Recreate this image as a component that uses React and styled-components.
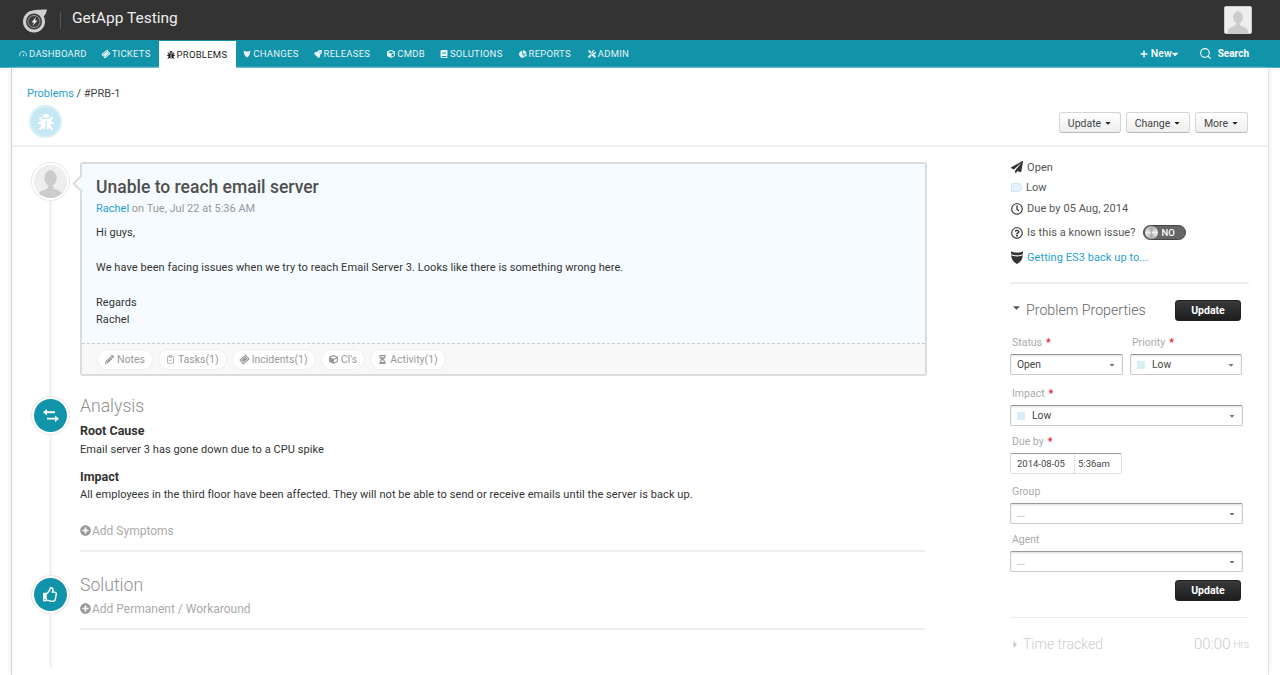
import React from 'react';
import styled, { createGlobalStyle } from 'styled-components';
import {
  FaTicketAlt, FaBug, FaRocket, FaCube, FaBook, FaChartPie, FaTools,
  FaPlus, FaPaperPlane, FaRegClock, FaRegQuestionCircle, FaPencilAlt,
  FaHourglassHalf, FaRegThumbsUp, FaPlusCircle, FaCaretDown, FaCaretRight,
} from 'react-icons/fa';
import { FiSearch } from 'react-icons/fi';
import { LuClipboardCheck } from 'react-icons/lu';

const GlobalStyle = createGlobalStyle`
  html, body { margin: 0; padding: 0; height: 675px; overflow: hidden; background: #fff; }
  body { font-family: Roboto, "Liberation Sans", sans-serif; font-size: 11px; color: #333; }
  * { box-sizing: border-box; }
`;

const TopBar = styled.header`
  height: 40px;
  background: #333;
  display: flex;
  align-items: center;
  padding: 0 28px 0 22px;
`;

const Divider = styled.span`
  width: 1px;
  height: 17px;
  background: #555;
  margin: 0 11px 0 12px;
`;

const AppName = styled.div`
  font-size: 15.5px;
  color: #eee;
  flex: 1;
  padding-bottom: 4px;
`;

const UserPic = styled.div`
  width: 28px;
  height: 28px;
  background: #eee;
  border: 1px solid #ccc;
  border-radius: 2px;
  overflow: hidden;
  display: flex;
`;

const Nav = styled.nav`
  height: 28px;
  background: #1193a9;
  border-bottom: 1px solid #4fb3c4;
  display: flex;
  align-items: stretch;
  padding-left: 19px;
  color: #e6f4f6;
`;

const NavItem = styled.a`
  display: flex;
  align-items: center;
  gap: 2px;
  font-size: 9.5px;
  letter-spacing: 0.25px;
  margin-right: ${p => p.$gap}px;
  svg { width: 8px; height: 8px; flex: none; }
  ${p => p.$active && `
    background: #fff;
    color: #222;
    height: 27px;
    margin-top: 1px;
    margin-bottom: -1px;
    padding: 0 9px 0 8px;
    svg { color: #222; }
  `}
`;

const NavRight = styled.div`
  margin-left: auto;
  display: flex;
  align-items: center;
  padding-right: 31px;
  color: #fff;
  font-size: 10px;
  font-weight: 700;
`;

const NewLink = styled.span`
  display: flex;
  align-items: center;
  gap: 3px;
  margin-right: 21px;
  font-size: 10.5px;
  font-weight: 500;
  svg:first-child { font-size: 8px; }
  svg:last-child { margin: 0 -2px 0 -5px; font-size: 10px; }
`;

const SearchLink = styled.span`
  display: flex;
  align-items: center;
  gap: 6px;
`;

const Page = styled.div`
  margin: 0 11px;
  height: 607px;
  border-left: 1px solid #d4d4d4;
  border-right: 1px solid #e4e4e4;
  box-shadow: -3px 0 4px -2px #eee, 3px 0 4px -2px #eee;
  background: #fff;
`;

const PageHead = styled.div`
  height: 79px;
  border-bottom: 2px solid #eee;
  padding: 19px 20px 0 15px;
  display: flex;
  justify-content: space-between;
`;

const Crumbs = styled.div`
  font-size: 11px;
  line-height: 14px;
  color: #444;
  a { color: #2a9fd0; }
`;

const BugBadge = styled.div`
  width: 33px;
  height: 33px;
  margin: 4px 0 0 2px;
  border-radius: 50%;
  background: #c6e8f5;
  border: 2px solid #d8eff8;
  color: #fff;
  display: flex;
  align-items: center;
  justify-content: center;
  font-size: 16px;
`;

const Actions = styled.div`
  display: flex;
  gap: 5px;
  padding-top: 25px;
`;

const ActionButton = styled.button`
  height: 21px;
  width: ${p => p.$w}px;
  font: 400 10.5px Roboto, sans-serif;
  color: #444;
  background: linear-gradient(#fff, #eee);
  border: 1px solid #d5d5d5;
  border-bottom-color: #bbb;
  border-radius: 3px;
  display: flex;
  align-items: center;
  justify-content: center;
  gap: 3px;
  padding: 1px 0 0;
  svg { font-size: 8px; color: #222; }
`;

const Body = styled.div`
  display: grid;
  grid-template-columns: 915px 1fr;
`;

const Main = styled.main`
  position: relative;
  padding: 15px 0 0 68px;
  height: 520px;
  &::before {
    content: '';
    position: absolute;
    left: 37px;
    top: 30px;
    height: 490px;
    width: 3px;
    background: #f3f3f3;
  }
`;

const Marker = styled.div`
  position: absolute;
  left: 19px;
  top: ${p => p.$top}px;
  width: 39px;
  height: 39px;
  border-radius: 50%;
  border: 1px solid #e8e8e8;
  background: #fff;
  padding: 2px;
  & > div {
    width: 100%;
    height: 100%;
    border-radius: 50%;
    background: ${p => p.$teal ? '#1193a9' : '#eee'};
    overflow: hidden;
    color: #fff;
    font-size: 15px;
    display: flex;
    align-items: center;
    justify-content: center;
  }
`;

const Card = styled.article`
  position: relative;
  width: 847px;
  height: 214px;
  border: 2px solid #dcdcdc;
  border-radius: 3px;
  background: #f5fbfe;
  display: flex;
  flex-direction: column;
  &::before {
    content: '';
    position: absolute;
    left: -7px;
    top: 13px;
    width: 11px;
    height: 11px;
    background: #f5fbfe;
    border-left: 2px solid #dcdcdc;
    border-bottom: 2px solid #dcdcdc;
    transform: rotate(45deg);
  }
`;

const CardBody = styled.div`
  flex: 1;
  padding: 12px 14px 0;
`;

const Title = styled.h1`
  margin: 0;
  font-size: 17.5px;
  line-height: 22px;
  font-weight: 500;
  color: #4f4f4f;
`;

const Meta = styled.div`
  margin: 4px 0 8px;
  font-size: 11px;
  line-height: 14px;
  color: #999;
  a { color: #2a9fd0; }
`;

const Message = styled.p`
  margin: 0;
  font-size: 11px;
  line-height: 17.4px;
  letter-spacing: 0.07px;
  color: #333;
`;

const CardFoot = styled.div`
  height: 31px;
  background: #f8f8f8;
  border-top: 1px dashed #ccc;
  padding: 0 15px;
  display: flex;
  align-items: center;
  gap: 5px;
`;

const Pill = styled.span`
  height: 21px;
  padding: 0 7px;
  background: #fff;
  border: 1px solid #efefef;
  border-radius: 11px;
  color: #999;
  font-size: 10.5px;
  display: flex;
  align-items: center;
  gap: 3px;
  svg { font-size: 9px; }
`;

const TiltedTicket = styled(FaTicketAlt)`
  transform: rotate(-40deg);
`;

const SectionTitle = styled.h2`
  margin: 0;
  font-size: 17.6px;
  line-height: 22px;
  font-weight: 300;
  color: #8f8f8f;
`;

const Analysis = styled.section`
  width: 845px;
  margin-top: 19px;
  padding-bottom: 12px;
  border-bottom: 2px solid #eee;
`;

const Solution = styled.section`
  width: 845px;
  margin-top: 22px;
  padding-bottom: 12px;
  border-bottom: 2px solid #eee;
`;

const SubTitle = styled.h3`
  margin: 6px 0 3.5px;
  font-size: 12.5px;
  line-height: 16px;
  font-weight: 700;
  color: #333;
`;

const Text = styled.p`
  margin: 0 0 12px;
  font-size: 11px;
  line-height: 14px;
  letter-spacing: 0.07px;
  color: #333;
`;

const AddLink = styled.a`
  display: flex;
  align-items: center;
  gap: 1px;
  font-size: 12px;
  line-height: 14px;
  color: #aaa;
  margin-top: ${p => p.$mt}px;
  svg { color: #999; font-size: 11px; margin-top: -1px; }
`;

const Side = styled.aside`
  padding: 10px 0 0 83px;
  width: 322px;
`;

const InfoRow = styled.div`
  height: ${p => p.$h}px;
  padding-left: 1px;
  display: flex;
  align-items: center;
  gap: 4px;
  font-size: 11px;
  letter-spacing: 0.07px;
  color: #555;
  a { color: #2a9fd0; }
  svg { font-size: 12px; color: #333; flex: none; }
`;

const Tag = styled.span`
  width: 11px;
  height: 9px;
  background: #e2f3fa;
  border: 1px solid #cde8f3;
  border-radius: 1px 4px 4px 1px;
`;

const Toggle = styled.span`
  width: 43px;
  height: 15px;
  border-radius: 8px;
  background: #666;
  border: 1px solid #444;
  margin-left: 3px;
  display: flex;
  align-items: center;
  color: #fff;
  font-size: 9.5px;
  font-weight: 500;
  gap: 4px;
  padding-left: 1px;
  &::before {
    content: '';
    width: 13px;
    height: 13px;
    border-radius: 50%;
    background: conic-gradient(#aaa, #eee, #aaa, #eee, #aaa);
  }
`;

const Rule = styled.hr`
  margin: ${p => p.$m};
  border: 0;
  height: ${p => p.$h || 2}px;
  background: #eee;
`;

const PropsHead = styled.div`
  display: flex;
  align-items: center;
  height: 20px;
  margin-top: 16px;
  padding: 0 8px 0 1px;
  font-size: 14.2px;
  font-weight: 300;
  color: #666;
  svg { font-size: 11px; color: #555; margin-right: 4px; margin-top: -5px; }
  span { flex: 1; }
`;

const DarkButton = styled.button`
  width: 66px;
  height: 21px;
  padding: 0;
  background: linear-gradient(#3a3a3a, #1d1d1d);
  border: 1px solid #222;
  border-radius: 3px;
  color: #fff;
  font: 700 10.5px Roboto, sans-serif;
`;

const FieldRow = styled.div`
  display: flex;
  gap: 7px;
  margin-top: ${p => p.$mt}px;
`;

const Field = styled.div`
  width: ${p => p.$w}px;
`;

const Label = styled.label`
  display: block;
  height: 14px;
  margin: 0 0 4px 2px;
  font-size: 10.5px;
  line-height: 14px;
  color: #aaa;
  b { color: #e0202a; font-weight: 700; margin-left: 4px; }
`;

const Select = styled.div`
  height: 21px;
  background: #fff;
  border: 1px solid #ccc;
  border-top: 1px solid #999;
  border-radius: 2px;
  box-shadow: inset 0 1px 2px #ddd;
  padding: 0 6px 0 6px;
  display: flex;
  align-items: center;
  font-size: 10.3px;
  color: ${p => p.$muted ? '#999' : '#444'};
  span { flex: 1; }
  svg { font-size: 8px; color: #777; }
  i { width: 8px; height: 8px; background: #d8eef7; margin-right: 7px; }
`;

const DateBox = styled.div`
  width: 112px;
  height: 21px;
  background: #fff;
  border: 1px solid #ddd;
  border-top: 1px solid #999;
  border-radius: 2px;
  display: flex;
  align-items: center;
  font-size: 9.5px;
  color: #444;
`;

const DatePart = styled.span`
  width: 64px;
  padding-left: 6px;
  border-right: 1px dotted #ccc;
  line-height: 19px;
`;

const TimePart = styled.span`
  padding-left: 3px;
`;

const BottomAction = styled.div`
  display: flex;
  justify-content: flex-end;
  margin-top: 8px;
  padding-right: 8px;
`;

const TimeRow = styled.div`
  display: flex;
  align-items: center;
  height: 20px;
  padding-left: 1px;
  color: #ccc;
  font-size: 14px;
  font-weight: 300;
  svg { font-size: 11px; margin: 0 2px 0 -1px; }
  span { flex: 1; }
  em { font-style: normal; font-size: 15px; }
  small { font-size: 10px; margin-left: 3px; }
`;

const Silhouette = ({ bg = '#eee', fg = '#ccc' }) => (
  <svg viewBox="0 0 40 40" width="100%" height="100%">
    <rect width="40" height="40" fill={bg} />
    <ellipse cx="20" cy="16" rx="7.5" ry="9.5" fill={fg} />
    <path d="M4 40c0-8 8-10 12-11l1-4h6l1 4c4 1 12 3 12 11z" fill={fg} />
  </svg>
);

const Logo = () => (
  <svg width="26" height="26" viewBox="0 0 26 26">
    <circle cx="12" cy="14.5" r="9.5" fill="#3c3c3c" stroke="#cfcfcf" strokeWidth="3" />
    <path d="M5 6.5C9 3 15 2.5 25 2.5c-.5 3-1.5 5-3.5 7-3-3-9-5-16.5-3z" fill="#cfcfcf" />
    <circle cx="12" cy="14.5" r="6" fill="none" stroke="#999" strokeWidth="1" />
    <path d="M14 10l-4.500 5.500h2.500l-1.500 3.500 5-5.500h-2.500z" fill="#eee" />
  </svg>
);

const Shield = () => (
  <svg width="12" height="13" viewBox="0 0 12 13">
    <path d="M0 0c1 1 3 1.500 6 1.500S11 1 12 0v2.800C11 3.800 9 4.300 6 4.300S1 3.800 0 2.800z" fill="#333" />
    <path d="M.2 4C1.500 5 3.500 5.400 6 5.400S10.500 5 11.800 4c0 4-2.500 7.500-5.800 9C2.700 11.500.2 8 .2 4z" fill="#333" />
  </svg>
);

const Gauge = () => (
  <svg viewBox="0 0 12 12">
    <path d="M1.500 9.500a5 5 0 1 1 9 0" fill="none" stroke="currentColor" strokeWidth="1.300" />
    <path d="M5.500 9l2.500-4.500-1 5z" fill="currentColor" />
  </svg>
);

const ChangeShield = () => (
  <svg viewBox="0 0 12 13">
    <path d="M.5 1c1.500 1 3.200 1.500 5.500 1.500S10 2 11.500 1c0 5-1.500 9-5.500 11.500C2 10 .5 6 .5 1z" fill="currentColor" />
  </svg>
);

const SwapArrows = () => (
  <svg width="16" height="13" viewBox="0 0 16 13">
    <path d="M12 2.300H4V0L0 3.300l4 3.200V4.200h8z" fill="#fff" />
    <path d="M4 8.700h8V6.500l4 3.200-4 3.300v-2.400H4z" fill="#fff" />
  </svg>
);

const navItems = [
  { label: 'DASHBOARD', icon: <Gauge />, gap: 15 },
  { label: 'TICKETS', icon: <TiltedTicket />, gap: 8 },
  { label: 'PROBLEMS', icon: <FaBug />, gap: 7, active: true },
  { label: 'CHANGES', icon: <ChangeShield />, gap: 15 },
  { label: 'RELEASES', icon: <FaRocket />, gap: 17 },
  { label: 'CMDB', icon: <FaCube />, gap: 15 },
  { label: 'SOLUTIONS', icon: <FaBook />, gap: 16 },
  { label: 'REPORTS', icon: <FaChartPie />, gap: 17 },
  { label: 'ADMIN', icon: <FaTools />, gap: 0 },
];

const App = () => (
  <>
    <GlobalStyle />
    <TopBar>
      <Logo />
      <Divider />
      <AppName>GetApp Testing</AppName>
      <UserPic><Silhouette /></UserPic>
    </TopBar>
    <Nav>
      {navItems.map(item => (
        <NavItem key={item.label} $gap={item.gap} $active={item.active}>
          {item.icon}{item.label}
        </NavItem>
      ))}
      <NavRight>
        <NewLink><FaPlus />New<FaCaretDown /></NewLink>
        <SearchLink><FiSearch size={13} />Search</SearchLink>
      </NavRight>
    </Nav>
    <Page>
      <PageHead>
        <div>
          <Crumbs><a>Problems</a> / #PRB-1</Crumbs>
          <BugBadge><FaBug /></BugBadge>
        </div>
        <Actions>
          <ActionButton $w={62}>Update<FaCaretDown /></ActionButton>
          <ActionButton $w={64}>Change<FaCaretDown /></ActionButton>
          <ActionButton $w={53}>More<FaCaretDown /></ActionButton>
        </Actions>
      </PageHead>
      <Body>
        <Main>
          <Marker $top={15}><div><Silhouette /></div></Marker>
          <Marker $top={249} $teal><div><SwapArrows /></div></Marker>
          <Marker $top={428} $teal><div><FaRegThumbsUp /></div></Marker>
          <Card>
            <CardBody>
              <Title>Unable to reach email server</Title>
              <Meta><a>Rachel</a> on Tue, Jul 22 at 5:36 AM</Meta>
              <Message>Hi guys,</Message>
              <Message>&nbsp;</Message>
              <Message>We have been facing issues when we try to reach Email Server 3. Looks like there is something wrong here.</Message>
              <Message>&nbsp;</Message>
              <Message>Regards</Message>
              <Message>Rachel</Message>
            </CardBody>
            <CardFoot>
              <Pill><FaPencilAlt />Notes</Pill>
              <Pill><LuClipboardCheck />Tasks(1)</Pill>
              <Pill><TiltedTicket />Incidents(1)</Pill>
              <Pill><FaCube />CI's</Pill>
              <Pill><FaHourglassHalf />Activity(1)</Pill>
            </CardFoot>
          </Card>
          <Analysis>
            <SectionTitle>Analysis</SectionTitle>
            <SubTitle>Root Cause</SubTitle>
            <Text>Email server 3 has gone down due to a CPU spike</Text>
            <SubTitle>Impact</SubTitle>
            <Text>All employees in the third floor have been affected. They will not be able to send or receive emails until the server is back up.</Text>
            <AddLink $mt={22}><FaPlusCircle />Add Symptoms</AddLink>
          </Analysis>
          <Solution>
            <SectionTitle>Solution</SectionTitle>
            <AddLink $mt={6}><FaPlusCircle />Add Permanent / Workaround</AddLink>
          </Solution>
        </Main>
        <Side>
          <InfoRow $h={20}><FaPaperPlane />Open</InfoRow>
          <InfoRow $h={21}><Tag />Low</InfoRow>
          <InfoRow $h={21}><FaRegClock />Due by 05 Aug, 2014</InfoRow>
          <InfoRow $h={27}><FaRegQuestionCircle />Is this a known issue?<Toggle>NO</Toggle></InfoRow>
          <InfoRow $h={23}><Shield /><a>Getting ES3 back up to...</a></InfoRow>
          <Rule $m="13px 0 0" />
          <PropsHead>
            <FaCaretDown /><span>Problem Properties</span>
            <DarkButton>Update</DarkButton>
          </PropsHead>
          <FieldRow $mt={16}>
            <Field $w={113}>
              <Label>Status<b>*</b></Label>
              <Select><span>Open</span><FaCaretDown /></Select>
            </Field>
            <Field $w={112}>
              <Label>Priority<b>*</b></Label>
              <Select><i /><span>Low</span><FaCaretDown /></Select>
            </Field>
          </FieldRow>
          <FieldRow $mt={12}>
            <Field $w={233}>
              <Label>Impact<b>*</b></Label>
              <Select><i /><span>Low</span><FaCaretDown /></Select>
            </Field>
          </FieldRow>
          <FieldRow $mt={9}>
            <Field $w={233}>
              <Label>Due by<b>*</b></Label>
              <DateBox><DatePart>2014-08-05</DatePart><TimePart>5:36am</TimePart></DateBox>
            </Field>
          </FieldRow>
          <FieldRow $mt={11}>
            <Field $w={233}>
              <Label>Group</Label>
              <Select $muted><span>...</span><FaCaretDown /></Select>
            </Field>
          </FieldRow>
          <FieldRow $mt={9}>
            <Field $w={233}>
              <Label>Agent</Label>
              <Select $muted><span>...</span><FaCaretDown /></Select>
            </Field>
          </FieldRow>
          <BottomAction><DarkButton>Update</DarkButton></BottomAction>
          <Rule $m="16px 0 16px" $h={1} />
          <TimeRow><FaCaretRight /><span>Time tracked</span><em>00:00</em><small>Hrs</small></TimeRow>
        </Side>
      </Body>
    </Page>
  </>
);

export default App;
